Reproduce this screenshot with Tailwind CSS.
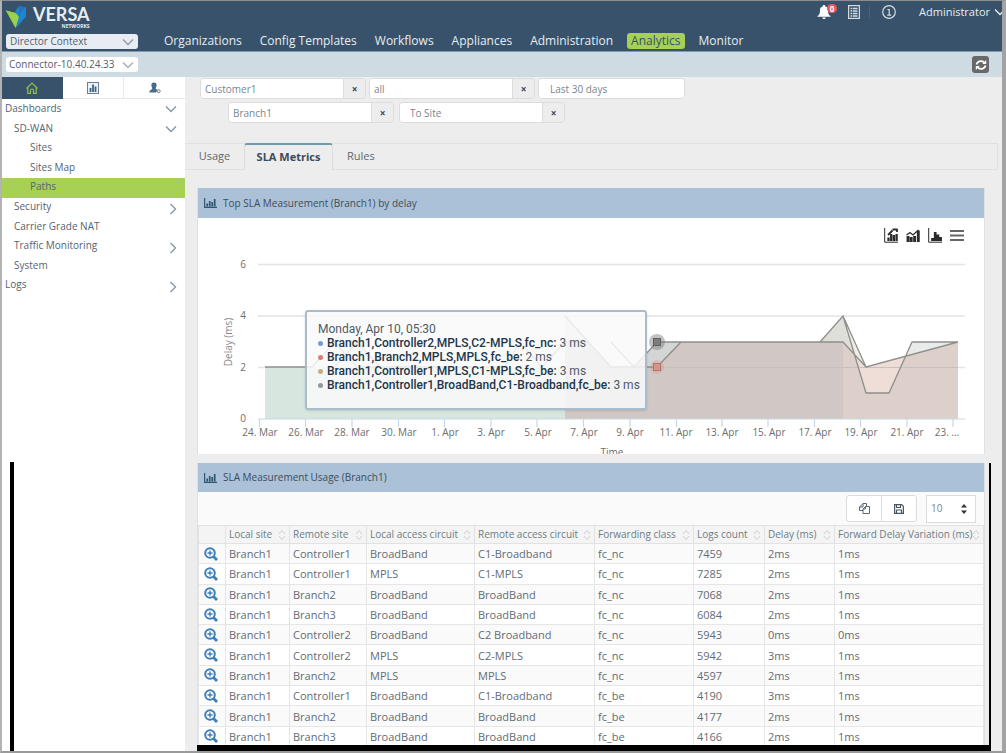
<!DOCTYPE html>
<html lang="en">
<head>
<meta charset="utf-8">
<title>Versa Director - Analytics</title>
<script src="https://cdn.jsdelivr.net/npm/@tailwindcss/browser@4"></script>
</head>
<body class="bg-[#ededed] text-[#55636f]" style="font-family:'Open Sans','Noto Sans',sans-serif">
<svg class="hidden">
  <symbol id="down" viewBox="0 0 12 8"><path d="M1 1.5 6 6.5 11 1.5" fill="none" stroke="currentColor" stroke-width="1.3"/></symbol>
  <symbol id="right" viewBox="0 0 8 12"><path d="M1.5 1 6.5 6 1.5 11" fill="none" stroke="currentColor" stroke-width="1.3"/></symbol>
  <symbol id="bars" viewBox="0 0 13 10"><path d="M.6 0v9.4H13" fill="none" stroke="currentColor" stroke-width="1.2"/><path d="M3.200 8.500V5.500M5.700 8.500V3M8.200 8.500V4M10.700 8.500V1" fill="none" stroke="currentColor" stroke-width="1.7"/></symbol>
  <symbol id="sort" viewBox="0 0 8 12"><path d="M1 5 4 1.5 7 5M1 7l3 3.500L7 7" fill="none" stroke="currentColor" stroke-width="1"/></symbol>
  <symbol id="mag" viewBox="0 0 14 14"><circle cx="6" cy="6" r="4.800" fill="none" stroke="currentColor" stroke-width="2"/><path d="M9.500 9.500 13 13" stroke="currentColor" stroke-width="2.800"/><path d="M6 3.500v5M3.500 6h5" stroke="currentColor" stroke-width="1.400"/></symbol>
</svg>
<div class="flex h-screen flex-col overflow-hidden border-t border-r-4 border-b-2 border-l-2 border-t-[#8c8c8c] border-r-[#a3a3a3] border-b-[#9a9a9a] border-l-[#b3b3b3]">
  <header class="flex h-[51px] shrink-0 flex-col border-b border-[#7f9bb3] bg-[#37526a] text-[#e8edf1]">
    <div class="flex h-[30px] items-center justify-between pl-[3px]">
      <a href="#" aria-label="Versa Networks" class="flex items-start gap-1">
        <svg class="mt-0.5 h-6 w-6" viewBox="0 0 24 24"><path d="M1 5.500 10.500 8v15z" fill="#8fc63f"/><path d="M1 5.500 10.500 8l4.500 2-4.200 13z" fill="#9bd04a"/><path d="M14 1l7 1.500v9L11 23l3-11-4-5z" fill="#1b86d6"/><path d="M14 1l7 1.500-4 3-3 6z" fill="#2c6fb4"/></svg>
        <span class="flex flex-col items-end pt-0.5">
          <span class="text-[18px] leading-[19px] font-bold" style="font-family:Lato,sans-serif">VERSA</span>
          <span class="text-[5px] leading-[5px] font-bold">NETWORKS</span>
        </span>
      </a>
      <div class="-mt-2 -mr-0.5 flex items-center text-[11px]">
        <button aria-label="Notifications" class="relative mr-[17px]">
          <svg class="h-[14px] w-[14px]" viewBox="0 0 14 14"><path d="M7 0c.8 0 1.200.5 1.200 1.200C10.300 1.800 11 3.500 11 5.500c0 3 .8 4.500 2.500 5.500v.8H.5V11C2.200 10 3 8.500 3 5.500c0-2 .7-3.700 2.800-4.300C5.800.5 6.200 0 7 0zM5.300 12.500h3.400c-.2 1-.8 1.500-1.700 1.500s-1.500-.5-1.700-1.500z" fill="#fff"/></svg>
          <span class="absolute -top-px left-2.5 h-[9px] w-[10px] rounded-full bg-[#e8595b] text-center text-[8px] leading-[9px] font-bold text-white">0</span>
        </button>
        <button aria-label="Tasks" class="mr-[9px]"><svg class="h-[14px] w-3" viewBox="0 0 12 14" fill="none" stroke="#d5dde3"><rect x=".6" y=".6" width="10.800" height="12.800" stroke-width="1.200"/><path d="M2.500 3.500h7M2.500 6h7M2.500 8.500h7M2.500 11h7" stroke-width="1.400" stroke-dasharray="1.500 .7 6"/></svg></button>
        <span class="mr-[12px] h-3 w-px bg-[#4a637a]"></span>
        <button aria-label="Information" class="mr-[23px]"><svg class="h-[14px] w-[14px]" viewBox="0 0 14 14" fill="none" stroke="#d5dde3" stroke-width="1.200"><circle cx="7" cy="7" r="6.300"/><path d="M5.500 4.500H7.200V10M5.200 10.200h4"/></svg></button>
        <button class="flex items-center gap-1">Administrator<svg class="-mr-0.5 h-2 w-3"><use href="#down"/></svg></button>
      </div>
    </div>
    <nav class="flex h-5 items-center pl-[4px] text-xs">
      <div class="relative mr-[26px]">
        <select aria-label="Context" class="block h-[15px] w-[132px] appearance-none rounded-[3px] bg-[#e8edf3] pl-[4px] text-[10px] leading-[15px] text-[#55606b]"><option>Director Context</option></select>
        <svg class="pointer-events-none absolute top-1 right-1 h-2 w-3 text-[#8d98a3]"><use href="#down"/></svg>
      </div>
      <div class="flex items-center gap-[18px]">
        <a href="#">Organizations</a><a href="#">Config Templates</a><a href="#">Workflows</a><a href="#">Appliances</a><a href="#">Administration</a>
        <a href="#" class="-mx-1 rounded-[3px] bg-[#a6d154] px-1 leading-4 text-[#37526a]">Analytics</a><a href="#">Monitor</a>
      </div>
    </nav>
  </header>
  <div class="flex h-[25px] shrink-0 items-center justify-between bg-[#cfdbe3] pr-[13px] pl-[4px]">
    <div class="relative">
      <select aria-label="Connector" class="block h-[15px] w-[132px] appearance-none rounded-[3px] bg-white pl-[3px] text-[10px] leading-[15px] text-[#55606b]"><option>Connector-10.40.24.33</option></select>
      <svg class="pointer-events-none absolute top-1 right-1 h-2 w-3 text-[#a5adb5]"><use href="#down"/></svg>
    </div>
    <button aria-label="Refresh" class="flex h-[17px] w-[17px] items-center justify-center rounded-[3px] bg-[#686868]"><svg class="h-3 w-3" viewBox="0 0 12 12" fill="none" stroke="#fff" stroke-width="1.800"><path d="M1.500 5.500C2 2.500 6 .8 9 3.300M10.500 6.500C10 9.500 6 11.200 3 8.700"/><path d="M11.200 1v4H7.200zM.8 11V7h4z" fill="#fff" stroke="none"/></svg></button>
  </div>
  <div class="flex min-h-0 flex-1">
    <aside class="flex w-[183px] shrink-0 flex-col bg-white">
      <div class="flex h-[22px] shrink-0">
        <button aria-label="Home" class="flex flex-1 items-center justify-center bg-[#37526a]"><svg class="h-3 w-3" viewBox="0 0 12 12" fill="none" stroke="#8fc050" stroke-width="1.200"><path d="M.5 6.500 6 1l5.500 5.500M1.800 5.500v5.800h2.700V8.500a1.500 1.500 0 0 1 3 0v2.800h2.700V5.500"/></svg></button>
        <button aria-label="Reports" class="flex flex-1 items-center justify-center border-r border-b border-[#e2eaf0]"><svg class="h-3 w-3" viewBox="0 0 12 12"><rect x=".5" y=".5" width="11" height="11" fill="#eef2f5" stroke="#6c7f8f"/><path d="M3.500 10V6M6 10V2.500M8.500 10V4.500" stroke="#37648a" stroke-width="1.800"/></svg></button>
        <button aria-label="Users" class="flex flex-1 items-center justify-center border-b border-[#e2eaf0]"><svg class="h-3 w-3" viewBox="0 0 12 12"><path d="M5 .5c1.800 0 2.800 1.200 2.600 3-.1 1.400-.7 2-.9 2.700.2 1 1.300 1.300 1.800 2L7 10.500H.3C.3 8 2.800 8 3.300 6.200c-.2-.700-.8-1.300-.9-2.700C2.200 1.700 3.200.5 5 .5z" fill="#466d8c"/><circle cx="9.700" cy="9.200" r="1.500" fill="none" stroke="#6c7f8f"/></svg></button>
      </div>
      <nav class="grid h-[196px] shrink-0 grid-rows-10 text-[10px] leading-[18px] [&_a]:flex [&_a]:items-start [&_a]:justify-between [&_svg]:mt-1.5 [&_svg]:mr-2 [&_svg]:shrink-0 [&_svg]:text-[#8593a0]">
        <a href="#" class="pl-[3px]">Dashboards<svg class="h-2 w-3"><use href="#down"/></svg></a>
        <a href="#" class="pl-[12px]">SD-WAN<svg class="h-2 w-3"><use href="#down"/></svg></a>
        <a href="#" class="pl-[28px]">Sites</a>
        <a href="#" class="pl-[28px]">Sites Map</a>
        <a href="#" class="mt-px h-5 bg-[#a6d154] pl-[28px] leading-4">Paths</a>
        <a href="#" class="pl-[12px]">Security<svg class="h-3 w-2"><use href="#right"/></svg></a>
        <a href="#" class="pl-[12px]">Carrier Grade NAT</a>
        <a href="#" class="pl-[12px]">Traffic Monitoring<svg class="h-3 w-2"><use href="#right"/></svg></a>
        <a href="#" class="pl-[12px]">System</a>
        <a href="#" class="pl-[3px]">Logs<svg class="h-3 w-2"><use href="#right"/></svg></a>
      </nav>
      <div class="mt-[167px] ml-2 flex-1 border-l-4 border-black"></div>
    </aside>
    <main class="flex min-w-0 flex-1 flex-col text-[#7b858e]">
      <div class="flex flex-col gap-[3px] pt-px pl-[15px] text-[10px] [&_input]:h-full [&_input]:min-w-0 [&_input]:flex-1 [&_input]:bg-white [&_input]:outline-none [&_button]:w-[22px] [&_button]:border-l [&_button]:border-[#dcdcdc] [&_button]:bg-[#ededed] [&_button]:text-[10px] [&_button]:leading-none [&_button]:font-bold [&_button]:text-[#33475a]">
        <div class="flex gap-[3px]">
          <div class="flex h-[21px] w-[166px] overflow-hidden rounded-[4px] border border-[#dcdcdc]"><input aria-label="Customer" value="Customer1" class="pl-1"><button aria-label="Clear customer">×</button></div>
          <div class="flex h-[21px] w-[166px] overflow-hidden rounded-[4px] border border-[#dcdcdc]"><input aria-label="Scope" value="all" class="pl-1"><button aria-label="Clear scope">×</button></div>
          <div class="flex h-[21px] w-[147px] overflow-hidden rounded-[4px] border border-[#dcdcdc]"><input aria-label="Period" value="Last 30 days" class="pl-[11px]"></div>
        </div>
        <div class="flex gap-[5px] pl-7">
          <div class="flex h-[21px] w-[166px] overflow-hidden rounded-[4px] border border-[#dcdcdc]"><input aria-label="From site" value="Branch1" class="pl-[4px]"><button aria-label="Clear from site">×</button></div>
          <div class="flex h-[21px] w-[166px] overflow-hidden rounded-[4px] border border-[#dcdcdc]"><input aria-label="To site" value="To Site" class="pl-[10px]"><button aria-label="Clear to site">×</button></div>
        </div>
      </div>
      <div role="tablist" class="mt-5 mr-1 flex h-[27px] shrink-0 text-[11px] text-[#5d6872]">
        <button role="tab" class="w-[59px] border-t border-b border-[#e0e0e0] font-medium">Usage</button>
        <button role="tab" aria-selected="true" class="w-[89px] rounded-t-[3px] border-x border-t-2 border-x-[#dcdcdc] border-t-[#6f9bac] font-bold text-[#3c4b59]">SLA Metrics</button>
        <div class="flex flex-1 border border-l-0 border-[#e0e0e0]"><button role="tab" class="pl-[14px] font-medium">Rules</button></div>
      </div>
      <section class="relative mt-[18px] mr-[17px] ml-3 shrink-0 border-x border-[#e0e0e0] bg-white">
        <h2 class="flex h-[30px] items-center gap-1.5 bg-[#abc1d7] pl-1.5 text-[10px] text-[#3e4c59]"><svg class="h-2.5 w-[13px] text-[#2f556f]"><use href="#bars"/></svg>Top SLA Measurement (Branch1) by delay</h2>
        <svg class="block w-full" viewBox="198 218 786 236" font-size="10" fill="#6d6d6d">
          <g stroke="#e4e4e4" stroke-width="1.500"><path d="M258 264.500H965M258 316H965M258 367.500H965"/></g>
          <path d="M265 367H565V419H265z" fill="#d8e6e0"/>
          <path d="M565 316 611 367H565z" fill="#e3e8e0"/>
          <path d="M634 367 657 342H681L657 367z" fill="#d3d6d4"/>
          <path d="M565 342H588L611 367H657L681 342H843V419H565z" fill="#d1c8c5"/>
          <path d="M820 342 843 316 857 358 843 342z" fill="#dfdfda"/>
          <path d="M843 316 866 367 855 355z" fill="#f0ece8"/>
          <path d="M843 342 866 367 958 342V419H843z" fill="#ddd0cb"/>
          <path d="M855 355 866 367 906 356 889 393H866z" fill="#efded7"/>
          <path d="M906 356 912 342H958z" fill="#e9ebeb"/>
          <path d="M565 367.500H958" stroke="#c9bfbd" fill="none"/>
          <g fill="none" stroke="#8f8f8c" stroke-width="1.300"><path d="M265 367H312L335 342 357 367H505L520 342 542 367 565 342H588M335 367 357 342 380 367M565 316 611 367H657L681 342H843L866 367 958 342M611 342 634 367 657 342H820L843 316 866 367M843 316 866 393H889L912 342H958"/></g>
          <circle cx="657" cy="342" r="8" fill="#777" fill-opacity=".45"/><rect x="653.500" y="338.500" width="7" height="7" fill="#7d7d7b" stroke="#5f5f5d"/>
          <circle cx="657" cy="367" r="7" fill="#d08a83" fill-opacity=".3"/><rect x="653.500" y="363.500" width="7" height="7" fill="#d6948b" stroke="#b3736c"/>
          <path d="M258 419H965M259.500 419v8M305.500 419v8M352 419v8M398.500 419v8M444.500 419v8M491 419v8M537 419v8M583.500 419v8M630 419v8M676.500 419v8M722 419v8M768 419v8M814.500 419v8M860.500 419v8M907 419v8M953 419v8" stroke="#c8d8e6" stroke-width="1.200" fill="none"/>
          <g text-anchor="end"><text x="246" y="268">6</text><text x="246" y="319">4</text><text x="246" y="371">2</text><text x="246" y="422">0</text></g>
          <text text-anchor="middle" transform="translate(232 342) rotate(-90)" fill="#8a8a8a">Delay (ms)</text>
          <g text-anchor="middle"><text x="260" y="436">24. Mar</text><text x="306" y="436">26. Mar</text><text x="352" y="436">28. Mar</text><text x="399" y="436">30. Mar</text><text x="445" y="436">1. Apr</text><text x="491" y="436">3. Apr</text><text x="538" y="436">5. Apr</text><text x="584" y="436">7. Apr</text><text x="630" y="436">9. Apr</text><text x="676" y="436">11. Apr</text><text x="722" y="436">13. Apr</text><text x="769" y="436">15. Apr</text><text x="815" y="436">17. Apr</text><text x="861" y="436">19. Apr</text><text x="907" y="436">21. Apr</text><text x="947" y="436">23. …</text><text x="612" y="456">Time</text></g>
        </svg>
        <div class="absolute top-10 right-5 flex items-center gap-2 text-[#2b2b2b]">
          <button aria-label="Line and bar chart"><svg class="h-[15px] w-[14px]" viewBox="0 0 14 15" fill="none" stroke="currentColor"><path d="M.7 0V14.200H14"/><path d="M4.500 13V9.500M7.200 13V6M9.900 13V7M12.600 13V6" stroke-width="2.300"/><path d="M4 7 8.500 2.500M8.500 1.500h5M13 1v3" stroke-width="1.800"/></svg></button>
          <button aria-label="Stacked chart"><svg class="h-[15px] w-[14px]" viewBox="0 0 14 15" fill="none" stroke="currentColor"><path d="M2 14V8M5.200 14V9M8.600 14V8M12.300 14V2.500" stroke-width="2.900"/><path d="M.5 7 4 4.500 7 7 12.500 2" stroke-width="1.300"/></svg></button>
          <button aria-label="Bar chart"><svg class="h-[15px] w-[14px]" viewBox="0 0 14 15" fill="none" stroke="currentColor"><path d="M.7 0V14.200H14"/><path d="M4.500 13V10M7.200 13V4M9.900 13V6.500M12.600 13V9" stroke-width="2.700"/></svg></button>
          <button aria-label="Chart menu"><svg class="h-[13px] w-[14px]" viewBox="0 0 14 13"><path d="M0 2h14M0 6.500h14M0 11h14" stroke="#666" stroke-width="2"/></svg></button>
        </div>
        <div class="absolute top-[122px] left-[107px] h-[100px] w-[342px] rounded-[3px] border-2 border-[#a9bccb] bg-[#f9f9f9]/85 pt-2.5 pl-[11px] text-xs leading-[14px] whitespace-nowrap text-[#4c5a66] shadow-sm [&_b]:font-bold [&_b]:text-[#2e4053]" style="font-family:Roboto,sans-serif">
          <p>Monday, Apr 10, 05:30</p>
          <ul class="[&_b]:font-medium [&_b]:text-[#22364a] [&_i]:size-[5px] [&_i]:rounded-full [&_li]:flex [&_li]:items-center [&_li]:gap-1">
            <li><i class="bg-[#6f9fcb]"></i><span><b>Branch1,Controller2,MPLS,C2-MPLS,fc_nc:</b> 3 ms</span></li>
            <li><i class="bg-[#e07a74]"></i><span><b>Branch1,Branch2,MPLS,MPLS,fc_be:</b> 2 ms</span></li>
            <li><i class="bg-[#c4ad82]"></i><span><b>Branch1,Controller1,MPLS,C1-MPLS,fc_be:</b> 3 ms</span></li>
            <li><i class="bg-[#979797]"></i><span><b>Branch1,Controller1,BroadBand,C1-Broadband,fc_be:</b> 3 ms</span></li>
          </ul>
        </div>
      </section>
      <div class="mt-[9px] mr-[11px] ml-3 flex min-h-0 flex-1 flex-col overflow-hidden border-r-2 border-b-[6px] border-black bg-[#ededed] pr-1">
        <section class="min-h-0 flex-1 overflow-hidden border-x border-[#e0e0e0] bg-[#fafafa]">
          <h2 class="flex h-[29px] items-center gap-1.5 bg-[#abc1d7] pl-1.5 text-[10px] text-[#3e4c59]"><svg class="h-2.5 w-[13px] text-[#2f556f]"><use href="#bars"/></svg>SLA Measurement Usage (Branch1)</h2>
          <div class="flex h-[33px] items-center justify-end gap-[9px] pr-2">
            <div class="flex h-[27px] w-[71px] overflow-hidden rounded-[3px] border border-[#dcdcdc] bg-white">
              <button aria-label="Copy" class="flex flex-1 items-center justify-center border-r border-[#dcdcdc]"><svg class="h-[11px] w-[11px]" viewBox="0 0 11 11" fill="#fff" stroke="#5b6773"><path d="M4 .5h3.500v7H.5V4zM4 .5V4H.5"/><path d="M6.500 3.500h4v7h-6.500V6zM6.500 3.500V6H4"/></svg></button>
              <button aria-label="Save" class="flex flex-1 items-center justify-center"><svg class="h-2.5 w-2.5" viewBox="0 0 10 10" fill="none" stroke="#4a5864" stroke-width="1.200"><path d="M.6.6h7l1.800 1.800v7H.6z"/><path d="M2.500 1v2.500h4V1M2.500 9V6h5v3"/></svg></button>
            </div>
            <div class="relative">
              <select aria-label="Rows per page" class="block h-7 w-[50px] appearance-none border border-[#dcdcdc] bg-white pl-[4px] text-[10px]"><option>10</option></select>
              <svg class="pointer-events-none absolute top-2 right-2 h-3 w-2" viewBox="0 0 8 12" fill="#333"><path d="M1 4.500 4 1l3 3.500zM1 7.500 4 11l3-3.500z"/></svg>
            </div>
          </div>
          <table class="h-[222px] w-full table-fixed border-collapse text-left text-[11px] leading-[15px] whitespace-nowrap text-[#626c76] [&_td]:border [&_td]:border-[#e6e6e6] [&_td]:py-0 [&_td]:pr-0 [&_td]:pl-[3px] [&_th]:h-[18px] [&_th]:border [&_th]:border-[#e2e2e2] [&_th]:p-0 [&_th]:pl-[3px] [&_th]:font-medium">
            <colgroup><col class="w-[27px]"><col class="w-[64px]"><col class="w-[77px]"><col class="w-[108px]"><col class="w-[120px]"><col class="w-[99px]"><col class="w-[71px]"><col class="w-[70px]"><col></colgroup>
            <thead class="bg-[#f4f4f4] text-[10px] text-[#6b7d86]"><tr id="head"></tr></thead>
            <tbody id="rows" class="[&_tr:nth-child(even)]:bg-white"></tbody>
          </table>
        </section>
      </div>
    </main>
  </div>
</div>
<script>
const heads = ['Local site','Remote site','Local access circuit','Remote access circuit','Forwarding class','Logs count','Delay (ms)','Forward Delay Variation (ms)'];
document.getElementById('head').innerHTML = '<th aria-label="Details"></th>' + heads.map(h => `<th><div class="flex items-center justify-between pr-[3px]">${h}<svg class="h-3 w-2 shrink-0 text-[#cfcfcf]"><use href="#sort"/></svg></div></th>`).join('');
const rows = [
 ['Controller1','BroadBand','C1-Broadband','fc_nc','7459','2ms','1ms'],
 ['Controller1','MPLS','C1-MPLS','fc_nc','7285','2ms','1ms'],
 ['Branch2','BroadBand','BroadBand','fc_nc','7068','2ms','1ms'],
 ['Branch3','BroadBand','BroadBand','fc_nc','6084','2ms','1ms'],
 ['Controller2','BroadBand','C2 Broadband','fc_nc','5943','0ms','0ms'],
 ['Controller2','MPLS','C2-MPLS','fc_nc','5942','3ms','1ms'],
 ['Branch2','MPLS','MPLS','fc_nc','4597','2ms','1ms'],
 ['Controller1','BroadBand','C1-Broadband','fc_be','4190','3ms','1ms'],
 ['Branch2','BroadBand','BroadBand','fc_be','4177','2ms','1ms'],
 ['Branch3','BroadBand','BroadBand','fc_be','4166','2ms','1ms']];
document.getElementById('rows').innerHTML = rows.map(r => `<tr><td><button aria-label="Zoom" class="ml-0.5 block text-[#3f7fb8]"><svg class="h-3.5 w-3.5"><use href="#mag"/></svg></button></td>${['Branch1',...r].map(c => `<td>${c}</td>`).join('')}</tr>`).join('');
</script>
</body>
</html>
